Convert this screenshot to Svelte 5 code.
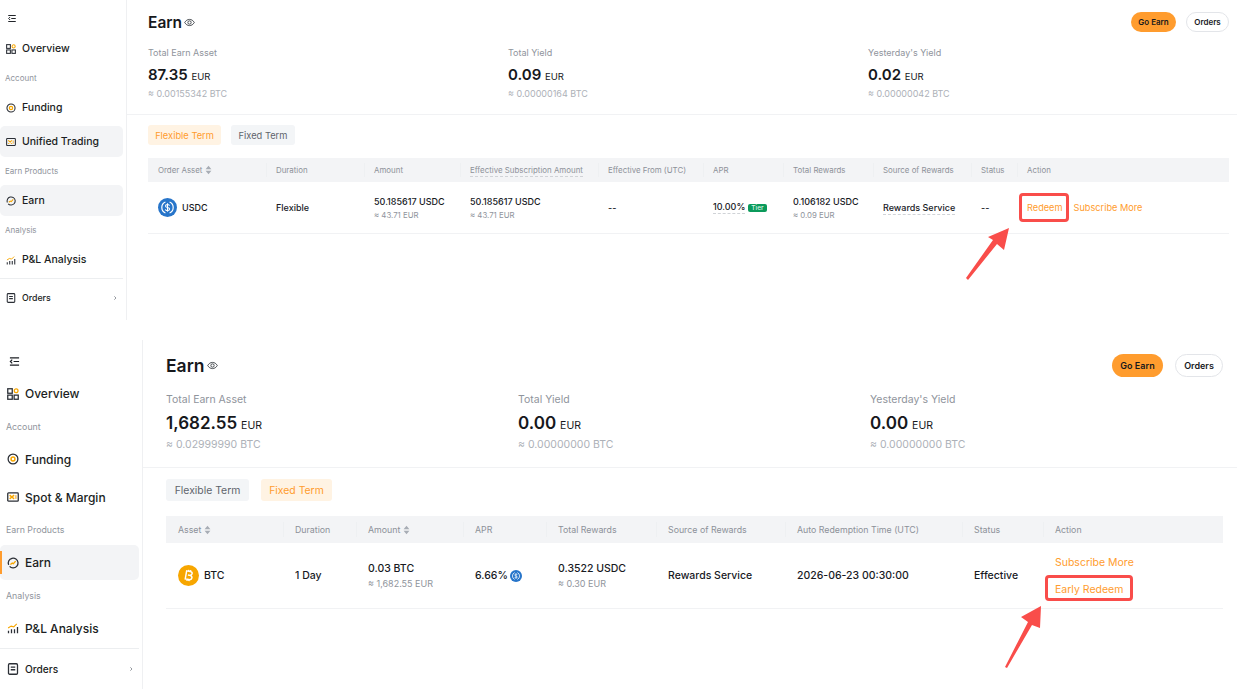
<script>
  const panelA = {
    cls: 'a',
    trade: 'Unified Trading',
    activeTrade: true,
    earnMark: false,
    total: '87.35', totalBtc: '≈ 0.00155342 BTC',
    yieldV: '0.09', yieldBtc: '≈ 0.00000164 BTC',
    yest: '0.02', yestBtc: '≈ 0.00000042 BTC',
    active: 'flex'
  };
  const panelB = {
    cls: 'b',
    trade: 'Spot & Margin',
    activeTrade: false,
    earnMark: true,
    total: '1,682.55', totalBtc: '≈ 0.02999990 BTC',
    yieldV: '0.00', yieldBtc: '≈ 0.00000000 BTC',
    yest: '0.00', yestBtc: '≈ 0.00000000 BTC',
    active: 'fixed'
  };
</script>

{#snippet icon(name)}
  <svg class="ico" viewBox="0 0 16 16" fill="none" stroke="#2b2f36" stroke-width="1.7">
    {#if name === 'overview'}
      <rect x="1" y="1" width="6" height="6" />
      <rect x="1" y="9.500" width="6" height="5.500" />
      <rect x="9.500" y="9.500" width="5.500" height="5.500" />
      <circle cx="12.200" cy="3.800" r="2.500" stroke="#f7a600" />
    {:else if name === 'funding'}
      <circle cx="8" cy="8" r="6.500" />
      <circle cx="8" cy="8" r="2.600" stroke="#f7a600" stroke-width="2" />
    {:else if name === 'wallet'}
      <rect x="1" y="2.500" width="14" height="11" rx="1" />
      <path d="M3.500 5.500l6 5M9.500 5.500l-6 5" stroke="#f7a600" stroke-width="1.800" />
      <path d="M10.500 5.500h2.500v5h-2.500z" fill="#f2c77a" stroke="none" />
    {:else if name === 'earn'}
      <path d="M2.200 10.500A6.500 6.500 0 1 1 8 14.500c-2 0-3.500-.7-4.500-2" />
      <path d="M4.500 10l2.500-1.800 1.500 .8 3-3.500" stroke="#f7a600" stroke-width="1.800" />
    {:else if name === 'chart'}
      <path d="M2 15v-3.500M6 15v-5.500M10 15v-5.500M14 15v-8.500" />
      <path d="M1.500 8l4-2.500 3.500 1L13 2.500" stroke="#f7a600" stroke-width="1.500" />
    {:else if name === 'orders'}
      <rect x="2" y="1" width="12" height="14" rx="1.500" />
      <path d="M5 5.500h6M5 9h6" stroke-width="1.800" />
    {/if}
  </svg>
{/snippet}

{#snippet eye()}
  <svg class="eye" viewBox="0 0 16 16" fill="none" stroke="#2b2f36" stroke-width="1.200">
    <path d="M1 8c1.800-3 4.200-4.500 7-4.500S13.200 5 15 8c-1.800 3-4.200 4.500-7 4.500S2.800 11 1 8z" />
    <circle cx="8" cy="8" r="2.400" />
  </svg>
{/snippet}

{#snippet sort()}
  <svg class="sort" viewBox="0 0 8 12" fill="#a8adb5">
    <path d="M4 1l3.500 4H.5zM4 11L.5 7h7z" />
  </svg>
{/snippet}

{#snippet usdc(cls)}
  <svg class={cls} viewBox="0 0 32 32">
    <circle cx="16" cy="16" r="16" fill="#2775ca" />
    <path d="M12.500 6.800a10 10 0 0 0 0 18.400M19.500 6.800a10 10 0 0 1 0 18.400" fill="none" stroke="#fff" stroke-width="2" />
    <path d="M19.500 12.800c-.5-1.300-1.800-2-3.500-2-2 0-3.400 1-3.400 2.600 0 3.800 7 1.700 7 5.300 0 1.600-1.500 2.600-3.600 2.600-1.900 0-3.300-.8-3.700-2.300M16 8.800v14.400" fill="none" stroke="#fff" stroke-width="1.800" />
  </svg>
{/snippet}

{#snippet btc()}
  <svg class="coin" viewBox="0 0 32 32">
    <circle cx="16" cy="16" r="16" fill="#f7a600" />
    <path d="M12 9.500h5.500c2.200 0 3.500 1.100 3.500 2.900 0 1.600-1 2.700-3 3 2.400.2 3.800 1.400 3.800 3.300 0 2.100-1.600 3.300-4 3.300H12zM15 15.500h3M15 9.500V7.500M18 9.500V7.500M15 24.500v-2M18 24.500v-2" fill="none" stroke="#fff" stroke-width="2.200" transform="rotate(10 16 16)" />
  </svg>
{/snippet}

{#snippet navItem(name, label, active, mark)}
  <div class="nav" class:active class:mark>
    {@render icon(name)}
    <span>{label}</span>
  </div>
{/snippet}

{#snippet sidebar(p)}
  <aside class="side">
    <svg class="burger" viewBox="0 0 12 12" fill="none" stroke="#1c1f24" stroke-width="1.300">
      <path d="M1 2h10M5 6h6M1 10h10" />
      <path d="M3.500 4L1.500 6l2 2" />
    </svg>
    {@render navItem('overview', 'Overview', false, false)}
    <div class="group">Account</div>
    {@render navItem('funding', 'Funding', false, false)}
    <div class="spacer"></div>
    {@render navItem('wallet', p.trade, p.activeTrade, false)}
    <div class="group">Earn Products</div>
    {@render navItem('earn', 'Earn', true, p.earnMark)}
    <div class="group">Analysis</div>
    {@render navItem('chart', 'P&L Analysis', false, false)}
    <div class="rule"></div>
    <div class="nav small">
      {@render icon('orders')}
      <span>Orders</span>
      <svg class="chev" viewBox="0 0 6 8" fill="none" stroke="#7a7f87" stroke-width="1.200"><path d="M2 1.500L4.500 4 2 6.500" /></svg>
    </div>
  </aside>
{/snippet}

{#snippet stat(label, value, btc)}
  <div class="stat">
    <div class="stat-label">{label}</div>
    <div class="stat-value"><b>{value}</b> <span>EUR</span></div>
    <div class="stat-btc">{btc}</div>
  </div>
{/snippet}

{#snippet top(p)}
  <div class="head">
    <h1>Earn</h1>
    {@render eye()}
    <div class="btns">
      <button class="go">Go Earn</button>
      <button class="orders">Orders</button>
    </div>
  </div>
  <div class="stats">
    {@render stat('Total Earn Asset', p.total, p.totalBtc)}
    {@render stat('Total Yield', p.yieldV, p.yieldBtc)}
    {@render stat("Yesterday's Yield", p.yest, p.yestBtc)}
  </div>
  <div class="hr"></div>
  <div class="tabs">
    <div class="tab" class:on={p.active === 'flex'}>Flexible Term</div>
    <div class="tab" class:on={p.active === 'fixed'}>Fixed Term</div>
  </div>
{/snippet}

<div class="page">
  <section class="panel a">
    {@render sidebar(panelA)}
    <main class="content">
      {@render top(panelA)}
      <div class="tr th">
        <div>Order Asset {@render sort()}</div>
        <div>Duration</div>
        <div>Amount</div>
        <div><u>Effective Subscription Amount</u></div>
        <div>Effective From (UTC)</div>
        <div>APR</div>
        <div>Total Rewards</div>
        <div>Source of Rewards</div>
        <div>Status</div>
        <div>Action</div>
      </div>
      <div class="tr td">
        <div class="asset">{@render usdc('coin')}<span>USDC</span></div>
        <div>Flexible</div>
        <div class="two"><span>50.185617 USDC</span><small>≈ 43.71 EUR</small></div>
        <div class="two"><span>50.185617 USDC</span><small>≈ 43.71 EUR</small></div>
        <div>--</div>
        <div class="apr"><u>10.00%</u><em>Tier</em></div>
        <div class="two"><span>0.106182 USDC</span><small>≈ 0.09 EUR</small></div>
        <div><u>Rewards Service</u></div>
        <div>--</div>
        <div class="acts">
          <a class="boxed" href="#r">Redeem</a>
          <a href="#s">Subscribe More</a>
        </div>
      </div>
    </main>
    <svg class="arrow" viewBox="0 0 60 60" fill="#f94d4a">
      <path d="M1 53L3 55 32 19 39 25 44 3 23 12 28 15z" />
    </svg>
  </section>

  <section class="panel b">
    {@render sidebar(panelB)}
    <main class="content">
      {@render top(panelB)}
      <div class="tr th">
        <div>Asset {@render sort()}</div>
        <div>Duration</div>
        <div>Amount {@render sort()}</div>
        <div>APR</div>
        <div>Total Rewards</div>
        <div>Source of Rewards</div>
        <div>Auto Redemption Time (UTC)</div>
        <div>Status</div>
        <div>Action</div>
      </div>
      <div class="tr td">
        <div class="asset">{@render btc()}<span>BTC</span></div>
        <div>1 Day</div>
        <div class="two"><span>0.03 BTC</span><small>≈ 1,682.55 EUR</small></div>
        <div class="apr"><span>6.66%</span>{@render usdc('mini')}</div>
        <div class="two"><span>0.3522 USDC</span><small>≈ 0.30 EUR</small></div>
        <div>Rewards Service</div>
        <div>2026-06-23 00:30:00</div>
        <div>Effective</div>
        <div class="acts col">
          <a href="#s">Subscribe More</a>
          <a class="boxed" href="#r">Early Redeem</a>
        </div>
      </div>
    </main>
    <svg class="arrow" viewBox="0 0 60 70" fill="#f94d4a">
      <path d="M1 65L3 66 28 23 36 26 37 4 17 15 24 20z" />
    </svg>
  </section>
</div>

<style>
  :global(body) {
    margin: 0;
    background: #fff;
  }

  .page {
    width: 1237px;
    height: 689px;
    overflow: hidden;
    font-family: Inter, "Noto Sans", "Liberation Sans", sans-serif;
    color: #16181c;
  }

  .panel {
    position: relative;
    display: flex;
  }

  .panel.a {
    height: 338px;
    --item: 31px;
    --label: 28px;
    --nav-font: 10.500px;
    --small-font: 8.800px;
    --group-font: 8px;
    --ico: 10px;
    --col-width: 360px;
  }

  .panel.b {
    height: 351px;
    --item: 35px;
    --label: 30.500px;
    --nav-font: 12px;
    --small-font: 10.200px;
    --group-font: 8.800px;
    --ico: 12px;
    --col-width: 352px;
  }

  .side {
    flex: none;
    box-sizing: border-box;
    border-right: 1px solid #eff0f2;
    display: flex;
    flex-direction: column;
  }

  .a .side {
    width: 127px;
    height: 320px;
    padding: 14px 3px 0 0;
  }

  .b .side {
    width: 143px;
    height: 351px;
    margin-top: 2px;
    padding: 16px 3px 0 0;
  }

  .burger {
    display: block;
  }

  .a .burger {
    width: 10px;
    height: 9px;
    margin: 0 0 10px 7px;
  }

  .b .burger {
    width: 11px;
    height: 11px;
    margin: 0 0 9px 9px;
  }

  .nav {
    position: relative;
    height: var(--item);
    flex: none;
    display: flex;
    align-items: center;
    border-radius: 5px;
    font-size: var(--nav-font);
    font-weight: 500;
    color: #1b1e23;
  }

  .a .nav {
    padding-left: 6px;
    gap: 6px;
  }

  .b .nav {
    padding-left: 7px;
    gap: 6px;
  }

  .nav.active {
    background: #f3f4f6;
  }

  .nav.mark::before {
    content: "";
    position: absolute;
    left: 0;
    top: 6px;
    bottom: 6px;
    width: 2px;
    background: #ff9c2e;
  }

  .nav.small {
    font-size: var(--small-font);
  }

  .chev {
    width: 4px;
    height: 6px;
    margin-left: auto;
    margin-right: 6px;
  }

  .ico {
    width: var(--ico);
    height: var(--ico);
    flex: none;
  }

  .group {
    height: var(--label);
    flex: none;
    display: flex;
    align-items: center;
    font-size: var(--group-font);
    color: #8f949c;
  }

  .a .group {
    padding-left: 5px;
  }

  .b .group {
    padding-left: 6px;
  }

  .spacer {
    height: 3px;
    flex: none;
  }

  .rule {
    height: 1px;
    flex: none;
    background: #eceef0;
    margin-top: 3px;
    margin-bottom: 3px;
  }

  .b .rule {
    margin-top: 2px;
    margin-bottom: 3px;
  }

  .content {
    flex: 1;
    min-width: 0;
  }

  .a .content {
    padding-top: 12px;
  }

  .b .content {
    padding-top: 16px;
  }

  .head {
    display: flex;
    align-items: center;
  }

  .a .head {
    height: 20px;
    margin: 0 8px 0 21px;
    gap: 2px;
  }

  .b .head {
    height: 23px;
    margin: 0 14px 0 23px;
    gap: 3px;
  }

  h1 {
    margin: 0;
    font-weight: 600;
  }

  .a h1 {
    font-size: 15.500px;
  }

  .b h1 {
    font-size: 17.500px;
  }

  .eye {
    width: 11px;
    height: 11px;
  }

  .btns {
    margin-left: auto;
    display: flex;
  }

  .a .btns {
    gap: 10px;
  }

  .b .btns {
    gap: 12px;
  }

  button {
    font-family: inherit;
    font-weight: 600;
    color: #17191d;
    border-radius: 999px;
    padding: 0;
    cursor: pointer;
  }

  .a button {
    font-size: 8px;
    height: 20px;
  }

  .b button {
    font-size: 9px;
    height: 23px;
  }

  .go {
    background: #ff9c2e;
    border: 0;
  }

  .orders {
    background: #fff;
    border: 1px solid #e3e5e9;
  }

  .a .go {
    width: 45px;
  }

  .a .orders {
    width: 43px;
  }

  .b .go {
    width: 51px;
  }

  .b .orders {
    width: 48px;
  }

  .stats {
    display: flex;
  }

  .a .stats {
    margin: 15px 0 0 21px;
  }

  .b .stats {
    margin: 16px 0 0 23px;
  }

  .stat {
    width: var(--col-width);
  }

  .stat-label {
    color: #8f949c;
  }

  .stat-btc {
    color: #adb1b8;
  }

  .a .stat-label,
  .a .stat-btc {
    font-size: 9px;
    line-height: 12px;
  }

  .b .stat-label,
  .b .stat-btc {
    font-size: 10.500px;
    line-height: 14px;
  }

  .stat-value b {
    font-weight: 600;
  }

  .a .stat-value {
    font-size: 9.500px;
    line-height: 22px;
    margin: 5px 0 0;
  }

  .a .stat-value b {
    font-size: 15px;
    margin-right: 1px;
  }

  .b .stat-value {
    font-size: 10.500px;
    line-height: 24px;
    margin: 4px 0 0;
  }

  .b .stat-value b {
    font-size: 17px;
    margin-right: 1px;
  }

  .hr {
    height: 1px;
    background: #f1f2f4;
  }

  .a .hr {
    margin-top: 14px;
  }

  .b .hr {
    margin-top: 15px;
  }

  .tabs {
    display: flex;
  }

  .a .tabs {
    gap: 10px;
    margin: 10px 0 13px 21px;
  }

  .b .tabs {
    gap: 12px;
    margin: 11px 0 15px 23px;
  }

  .tab {
    display: flex;
    align-items: center;
    justify-content: center;
    background: #f3f5f7;
    color: #5f646c;
    border-radius: 3px;
  }

  .tab.on {
    background: #fff3e3;
    color: #ff9c2e;
  }

  .a .tab {
    font-size: 9.300px;
    height: 20px;
    width: 64px;
  }

  .a .tab.on {
    width: 73px;
  }

  .b .tab {
    font-size: 10.400px;
    height: 22px;
    width: 83px;
  }

  .b .tab.on {
    width: 71px;
  }

  .tr {
    display: grid;
    align-items: center;
  }

  .a .tr {
    margin: 0 8px 0 21px;
    grid-template-columns: 118px 98px 96px 138px 105px 80px 90px 98px 46px 212px;
  }

  .b .tr {
    margin: 0 14px 0 23px;
    grid-template-columns: 117px 73px 107px 83px 110px 129px 177px 81px 180px;
  }

  .th {
    background: #f3f4f6;
    color: #8d9199;
  }

  .a .th {
    height: 24px;
    font-size: 7.900px;
  }

  .b .th {
    height: 27px;
    font-size: 8.800px;
  }

  .th > div {
    position: relative;
    white-space: nowrap;
  }

  .th > div + div::before {
    content: "";
    position: absolute;
    left: 0;
    top: -2px;
    bottom: -2px;
    width: 1px;
    background: #eef0f2;
  }

  .a .tr > div {
    padding-left: 10px;
  }

  .b .tr > div {
    padding-left: 12px;
  }

  .th u,
  .td u {
    text-decoration: none;
    border-bottom: 1px dashed #d0d3d7;
    padding-bottom: 1px;
  }

  .sort {
    display: inline-block;
    vertical-align: -2px;
    width: 7px;
    height: 10px;
  }

  .td {
    border-bottom: 1px solid #f1f2f4;
    font-weight: 500;
    color: #181a1f;
    box-sizing: border-box;
    white-space: nowrap;
  }

  .a .td {
    height: 52px;
    font-size: 9px;
  }

  .b .td {
    height: 66px;
    font-size: 10.500px;
  }

  .two {
    display: flex;
    flex-direction: column;
  }

  .two small {
    color: #8f949c;
    font-weight: 400;
  }

  .a .two {
    gap: 3px;
  }

  .a .two small {
    font-size: 7.800px;
  }

  .b .two {
    gap: 3px;
  }

  .b .two small {
    font-size: 9px;
  }

  .asset {
    display: flex;
    align-items: center;
  }

  .a .asset {
    gap: 5px;
  }

  .b .asset {
    gap: 5px;
  }

  :global(.coin) {
    display: block;
  }

  .a :global(.coin) {
    width: 19px;
    height: 19px;
  }

  .b :global(.coin) {
    width: 21px;
    height: 21px;
  }

  :global(.mini) {
    width: 12px;
    height: 12px;
  }

  .apr {
    display: flex;
    align-items: center;
    gap: 2px;
  }

  .apr em {
    font-style: normal;
    font-size: 6.500px;
    line-height: 8px;
    padding: 0 3px;
    margin-left: 1px;
    border-radius: 2px;
    background: #0b9a5b;
    color: #d9f5e6;
  }

  .acts {
    display: flex;
    align-items: center;
    gap: 11px;
  }

  .acts.col {
    flex-direction: column;
    align-items: flex-start;
    gap: 14px;
  }

  .acts a {
    position: relative;
    color: #ff9c2e;
    text-decoration: none;
    font-weight: 400;
    line-height: 13px;
  }

  .a .acts a {
    font-size: 9.200px;
  }

  .boxed::after {
    content: "";
    position: absolute;
    border: 3px solid #f94d4a;
    border-radius: 4px;
    inset: -8px -6px -8px -8px;
  }

  .b .boxed::after {
    inset: -8px -10px -5px -10px;
  }

  .arrow {
    position: absolute;
  }

  .a .arrow {
    left: 965px;
    top: 225px;
    width: 60px;
    height: 60px;
  }

  .b .arrow {
    left: 1004px;
    top: 264px;
    width: 60px;
    height: 70px;
  }
</style>
